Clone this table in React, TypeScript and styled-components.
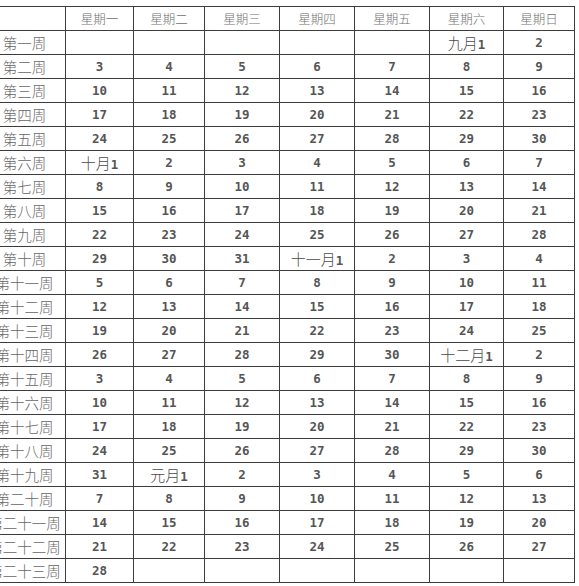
import styled, { createGlobalStyle } from 'styled-components';

const GlobalStyle = createGlobalStyle`
  html, body {
    margin: 0;
    padding: 0;
    background: #fff;
    overflow: hidden;
  }
`;

const weekdays = ['星期一', '星期二', '星期三', '星期四', '星期五', '星期六', '星期日'];

const weeks = [
  '第一周', '第二周', '第三周', '第四周', '第五周', '第六周', '第七周', '第八周',
  '第九周', '第十周', '第十一周', '第十二周', '第十三周', '第十四周', '第十五周',
  '第十六周', '第十七周', '第十八周', '第十九周', '第二十周', '第二十一周',
  '第二十二周', '第二十三周',
];

// 每行七天, 空串 = 空格子
const days: string[][] = [
  ['', '', '', '', '', '九月1', '2'],
  ['3', '4', '5', '6', '7', '8', '9'],
  ['10', '11', '12', '13', '14', '15', '16'],
  ['17', '18', '19', '20', '21', '22', '23'],
  ['24', '25', '26', '27', '28', '29', '30'],
  ['十月1', '2', '3', '4', '5', '6', '7'],
  ['8', '9', '10', '11', '12', '13', '14'],
  ['15', '16', '17', '18', '19', '20', '21'],
  ['22', '23', '24', '25', '26', '27', '28'],
  ['29', '30', '31', '十一月1', '2', '3', '4'],
  ['5', '6', '7', '8', '9', '10', '11'],
  ['12', '13', '14', '15', '16', '17', '18'],
  ['19', '20', '21', '22', '23', '24', '25'],
  ['26', '27', '28', '29', '30', '十二月1', '2'],
  ['3', '4', '5', '6', '7', '8', '9'],
  ['10', '11', '12', '13', '14', '15', '16'],
  ['17', '18', '19', '20', '21', '22', '23'],
  ['24', '25', '26', '27', '28', '29', '30'],
  ['31', '元月1', '2', '3', '4', '5', '6'],
  ['7', '8', '9', '10', '11', '12', '13'],
  ['14', '15', '16', '17', '18', '19', '20'],
  ['21', '22', '23', '24', '25', '26', '27'],
  ['28', '', '', '', '', '', ''],
];

const colWidths = [82, 68, 71, 75, 75, 75, 74, 71];

const DayText = ({ value }: { value: string }) => {
  const m = value.match(/^(\D+)(\d+)$/);
  if (!m) return <>{value}</>;
  return (
    <>
      <Month>{m[1]}</Month>
      {m[2]}
    </>
  );
};

const App = () => {
  return (
    <Page>
      <GlobalStyle />
      <Table>
        <colgroup>
          {colWidths.map((w, i) => (
            <col key={i} style={{ width: w }} />
          ))}
        </colgroup>
        <thead>
          <tr>
            <HeadCell />
            {weekdays.map((d) => (
              <HeadCell key={d}>{d}</HeadCell>
            ))}
          </tr>
        </thead>
        <tbody>
          {weeks.map((w, r) => (
            <tr key={w}>
              <WeekCell>{w}</WeekCell>
              {days[r].map((d, c) => (
                <DayCell key={c}>
                  <DayText value={d} />
                </DayCell>
              ))}
            </tr>
          ))}
        </tbody>
      </Table>
    </Page>
  );
};

export default App;

const Page = styled.div`
  width: 579px;
  height: 586px;
  padding-top: 6px;
  box-sizing: border-box;
  overflow: hidden;
`;

const Table = styled.table`
  margin-left: -17px;
  width: 591px;
  table-layout: fixed;
  border-collapse: collapse;
  td,
  th {
    border: 1px solid #3c3c3c;
    height: 23px;
    padding: 0;
    text-align: center;
    white-space: nowrap;
    overflow: visible;
  }
`;

const HeadCell = styled.th`
  font-family: 'Noto Sans CJK SC', sans-serif;
  font-size: 12.5px;
  font-weight: 300;
  color: #707070;
`;

const WeekCell = styled.td`
  font-family: 'Noto Sans CJK SC', sans-serif;
  font-size: 14.5px;
  font-weight: 300;
  color: #666;
`;

const DayCell = styled.td`
  font-family: 'DejaVu Sans Mono', monospace;
  font-size: 12.5px;
  font-weight: 700;
  color: #555;
`;

const Month = styled.span`
  font-family: 'Noto Sans CJK SC', sans-serif;
  font-size: 15px;
  font-weight: 300;
  color: #4a4a4a;
`;
